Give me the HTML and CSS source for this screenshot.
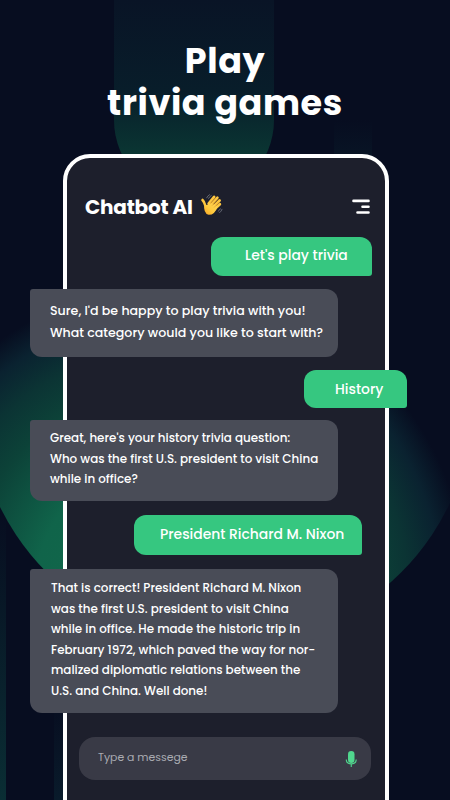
FILE: index.html
```html
<!DOCTYPE html>
<html lang="en">
<head>
  <meta charset="UTF-8">
  <meta name="viewport" content="width=device-width, initial-scale=1">
  <title>Chatbot AI</title>
  <link rel="stylesheet" href="styles.css">
</head>
<body>
  <div class="screen">
    <div class="shape shape-pill"></div>
    <div class="shape shape-circle"></div>
    <div class="shape shape-left"></div>
    <div class="shape shape-bottom"></div>
    <div class="shape shape-right"></div>

    <h1 class="headline">Play<br>trivia games</h1>

    <div class="phone">
      <header class="topbar">
        <h2>Chatbot AI</h2>
        <svg class="wave" viewBox="0 0 24 24">
          <defs>
            <linearGradient id="hand" x1="0" y1="1" x2="1" y2="0">
              <stop offset="0" stop-color="#f6a623"/>
              <stop offset=".45" stop-color="#ffca3e"/>
              <stop offset="1" stop-color="#ffd65a"/>
            </linearGradient>
          </defs>
          <g fill="none" stroke="#fdc640" stroke-width="2.700" stroke-linecap="round">
            <path d="M2.600 7.300Q4.500 9 5.500 13M9 11L14.700 4M11 13L18.200 4.800M13 15L20.500 7.800M15 17L20.800 11.700"/>
          </g>
          <path d="M4.300 11.500Q6.500 13.500 8 12L10 9.800L18.500 13.700Q15.500 23 9 22.800Q3.500 21.500 4.300 11.500Z" fill="url(#hand)"/>
          <g fill="none" stroke="#dc8a20" stroke-width=".6" stroke-linecap="round">
            <path d="M11 10.800L16 5M13 12.800L19 6.500M15 14.800L20 9.800"/>
          </g>
          <g fill="none" stroke="#777b86" stroke-width=".8" stroke-linecap="round">
            <path d="M7 5Q8 2.700 10 1.700M9 5.500Q10 3.500 11.700 2.700M20.500 20.500Q22.500 19 23 17M19 19Q20.700 18 21.200 16.500"/>
          </g>
        </svg>
        <svg class="menu" viewBox="0 0 18 16">
          <path d="M1.500 1.900H16.500M10.500 7.800H16.500M5.500 13.500H16.500" fill="none" stroke="#fff" stroke-width="2.600" stroke-linecap="round"/>
        </svg>
      </header>

      <main class="chat">
        <div class="msg user lets">Let's play trivia</div>
        <div class="msg bot sure">Sure, I'd be happy to play trivia with you!<br>What category would you like to start with?</div>
        <div class="msg user history">History</div>
        <div class="msg bot great">Great, here's your history trivia question:<br>Who was the first U.S. president to visit China<br>while in office?</div>
        <div class="msg user nixon">President Richard M. Nixon</div>
        <div class="msg bot correct">That is correct! President Richard M. Nixon<br>was the first U.S. president to visit China<br>while in office. He made the historic trip in<br>February 1972, which paved the way for nor-<br>malized diplomatic relations between the<br>U.S. and China. Well done!</div>
      </main>

      <footer class="composer">
        <span>Type a messege</span>
        <svg class="mic" viewBox="0 0 12 18">
          <rect x="3" y="1" width="6.500" height="12" rx="3.250" fill="#50d78e"/>
          <path d="M1.300 9.500C1.300 15.300 11.200 15.300 11.200 9.500M6.250 14V17" fill="none" stroke="#50d78e" stroke-width="1.100"/>
        </svg>
      </footer>
    </div>
  </div>
</body>
</html>
```
FILE: styles.css
```css
:root {
  --bg: #070d20;
  --panel: #1d1f2c;
  --bot: #494c57;
  --user: #36c780;
  --field: #393a46;
}
* { box-sizing: border-box; }
body {
  margin: 0;
  background: var(--bg);
  color: #fff;
  font-family: Poppins, Inter, "Open Sans", sans-serif;
  font-feature-settings: "cv11", "ss03";
}
.screen {
  position: relative;
  width: 450px;
  height: 800px;
  overflow: hidden;
}

/* background shapes */
.shape { position: absolute; }
.shape-pill {
  left: 114px;
  top: 0;
  width: 160px;
  height: 200px;
  border-radius: 0 0 80px 80px;
  background: linear-gradient(#091426, #081d2a 45%, #0a3432 75%, #0c4538);
}
.shape-circle {
  left: -26px;
  top: 146px;
  width: 500px;
  height: 500px;
  border-radius: 50%;
  background: radial-gradient(300px 310px at 195px 450px, #116c4b, #10644a 45%, #0c4238 68%, #0b3434 80%, #0a2230 91%, rgba(7, 13, 32, 0));
}
.shape-left {
  left: 0;
  top: 510px;
  width: 6px;
  height: 290px;
  background: linear-gradient(rgba(10, 46, 52, 0), #0a2e34);
}
.shape-bottom {
  left: 54px;
  top: 700px;
  width: 10px;
  height: 100px;
  background: linear-gradient(rgba(9, 27, 43, 0), #091b2b);
}
.shape-right {
  left: 334px;
  top: 120px;
  width: 38px;
  height: 36px;
  background: linear-gradient(rgba(8, 20, 37, 0), #081425);
}

.headline {
  position: relative;
  height: 154px;
  margin: 0;
  padding-top: 40px;
  text-align: center;
  font-size: 35px;
  line-height: 41.500px;
  font-weight: 700;
  letter-spacing: .6px;
}

.phone {
  position: relative;
  display: flex;
  flex-direction: column;
  width: 326px;
  height: 680px;
  margin-left: 63px;
  border: 4px solid #fff;
  border-radius: 27px;
  background: var(--panel);
}
.topbar {
  display: flex;
  align-items: center;
  height: 79px;
  padding: 18px 15px 0 18px;
}
.topbar h2 {
  width: 109px;
  margin: 0;
  font-size: 20px;
  font-weight: 700;
  letter-spacing: -.2px;
  white-space: nowrap;
}
.wave {
  width: 23px;
  height: 23px;
  margin: -5px 0 0 6px;
}
.menu {
  width: 18px;
  height: 16px;
  margin-left: auto;
}

.chat {
  display: flex;
  flex-direction: column;
}
.msg {
  flex-shrink: 0;
  font-weight: 500;
  white-space: nowrap;
}
.user {
  align-self: flex-end;
  background: var(--user);
  border-radius: 12px 12px 3px 12px;
  font-size: 13.900px;
  line-height: 20px;
}
.bot {
  width: 308px;
  margin-left: -37px;
  padding-left: 20px;
  background: var(--bot);
  border-radius: 3px 12px 12px 12px;
  font-size: 11.920px;
  line-height: 20.600px;
}
.lets {
  width: 161px;
  height: 39px;
  margin-right: 13px;
  padding: 8px 0 0 34px;
}
.sure {
  height: 68px;
  margin-top: 13px;
  padding-top: 11px;
  font-size: 12.600px;
  line-height: 22px;
}
.history {
  width: 103px;
  height: 38px;
  margin: 13px -22px 0 0;
  padding: 9px 0 0 31px;
}
.great {
  height: 81px;
  margin-top: 12px;
  padding-top: 8px;
}
.nixon {
  width: 228px;
  height: 40px;
  margin: 14px 23px 0 0;
  padding: 9px 0 0 26px;
}
.correct {
  height: 144px;
  margin-top: 14px;
  padding: 9px 0 0 21px;
}

.composer {
  display: flex;
  align-items: center;
  justify-content: space-between;
  width: 292px;
  height: 43px;
  margin: 24px 0 0 12px;
  padding: 0 14px 0 19px;
  border-radius: 16px;
  background: var(--field);
  color: #aaabb2;
  font-size: 10.900px;
}
.composer span {
  margin-top: -2px;
}
.mic {
  width: 12px;
  height: 18px;
}
```
